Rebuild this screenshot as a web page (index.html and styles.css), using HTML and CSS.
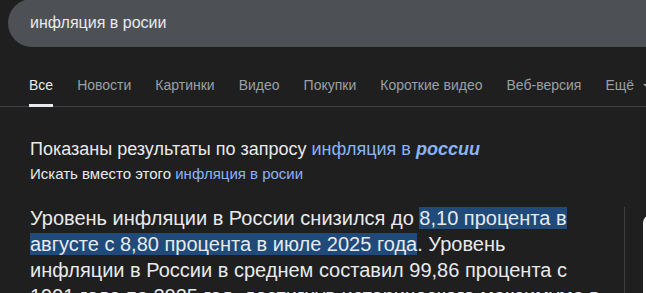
FILE: index.html
```html
<!DOCTYPE html>
<html lang="ru">
<head>
  <meta charset="UTF-8">
  <title>инфляция в росии</title>
  <link rel="stylesheet" href="styles.css">
</head>
<body>
  <header class="top">
    <div class="search-box">
      <span class="query">инфляция в росии</span>
    </div>
    <nav class="tabs">
      <a class="tab active" href="#">Все</a>
      <a class="tab" href="#">Новости</a>
      <a class="tab" href="#">Картинки</a>
      <a class="tab" href="#">Видео</a>
      <a class="tab" href="#">Покупки</a>
      <a class="tab" href="#">Короткие видео</a>
      <a class="tab" href="#">Веб-версия</a>
      <a class="tab more" href="#">Ещё <span class="arrow"></span></a>
    </nav>
  </header>

  <main class="results">
    <!-- spelling correction -->
    <div class="spell">
      <p class="shown">Показаны результаты по запросу <a href="#">инфляция в <b><i>россии</i></b></a></p>
      <p class="instead">Искать вместо этого <a href="#">инфляция в росии</a></p>
    </div>

    <div class="answer-row">
      <p class="answer">Уровень инфляции в России снизился до <mark>8,10 процента в августе с 8,80 процента в июле 2025 года</mark>. Уровень инфляции в России в среднем составил 99,86 процента с 1991 года по 2025 год, достигнув исторического максимума в</p>
      <div class="divider"></div>
      <div class="side-card"></div>
    </div>
  </main>
</body>
</html>
```

FILE: styles.css
```css
* {
  margin: 0;
  padding: 0;
  box-sizing: border-box;
}

body {
  font-family: Arial, 'Liberation Sans', sans-serif;
  background-color: #1f1f1f;
  color: #e8eaed;
  overflow: hidden;
}

a {
  text-decoration: none;
}

.search-box {
  margin-left: 8px;
  margin-top: -1px;
  height: 48px;
  background-color: #4d5156;
  border-radius: 24px 0 0 24px;
  display: flex;
  align-items: center;
  padding-left: 22px;
}

.query {
  font-size: 16px;
  color: #e8eaed;
}

.tabs {
  display: flex;
  gap: 24px;
  padding-left: 29px;
  margin-top: 26px;
  border-bottom: 1px solid #3c4043;
  white-space: nowrap;
}

.tab {
  flex-shrink: 0;
  font-size: 14px;
  color: #9aa0a6;
  padding: 4px 0 11px;
  border-bottom: 3px solid transparent;
  margin-bottom: -1px;
}

.tab.active {
  color: #e8eaed;
  border-bottom-color: #e8eaed;
}

.arrow {
  display: inline-block;
  border-left: 4px solid transparent;
  border-right: 4px solid transparent;
  border-top: 4px solid #9aa0a6;
  vertical-align: middle;
  margin-left: 5px;
}

.results {
  padding-left: 30px;
}

.spell {
  margin-top: 30px;
}

.shown {
  font-size: 18px;
  line-height: 24px;
  color: #e8eaed;
}

.shown a,
.instead a {
  color: #8ab4f8;
}

.instead {
  font-size: 15px;
  line-height: 20px;
  margin-top: 3px;
  color: #e8eaed;
}

.answer-row {
  display: flex;
  margin-top: 21px;
}

.answer {
  width: 575px;
  flex-shrink: 0;
  font-size: 20px;
  line-height: 26px;
  color: #e8eaed;
}

mark {
  background-color: #1f4a7a;
  color: #e8eaed;
}

.divider {
  flex-shrink: 0;
  width: 1px;
  height: 100px;
  margin-left: 19px;
  margin-top: 2px;
  background-color: #3c4043;
}

.side-card {
  flex-shrink: 0;
  width: 20px;
  height: 90px;
  margin-left: 18px;
  margin-top: 10px;
  background-color: #ffffff;
  border-top-left-radius: 8px;
}
```
